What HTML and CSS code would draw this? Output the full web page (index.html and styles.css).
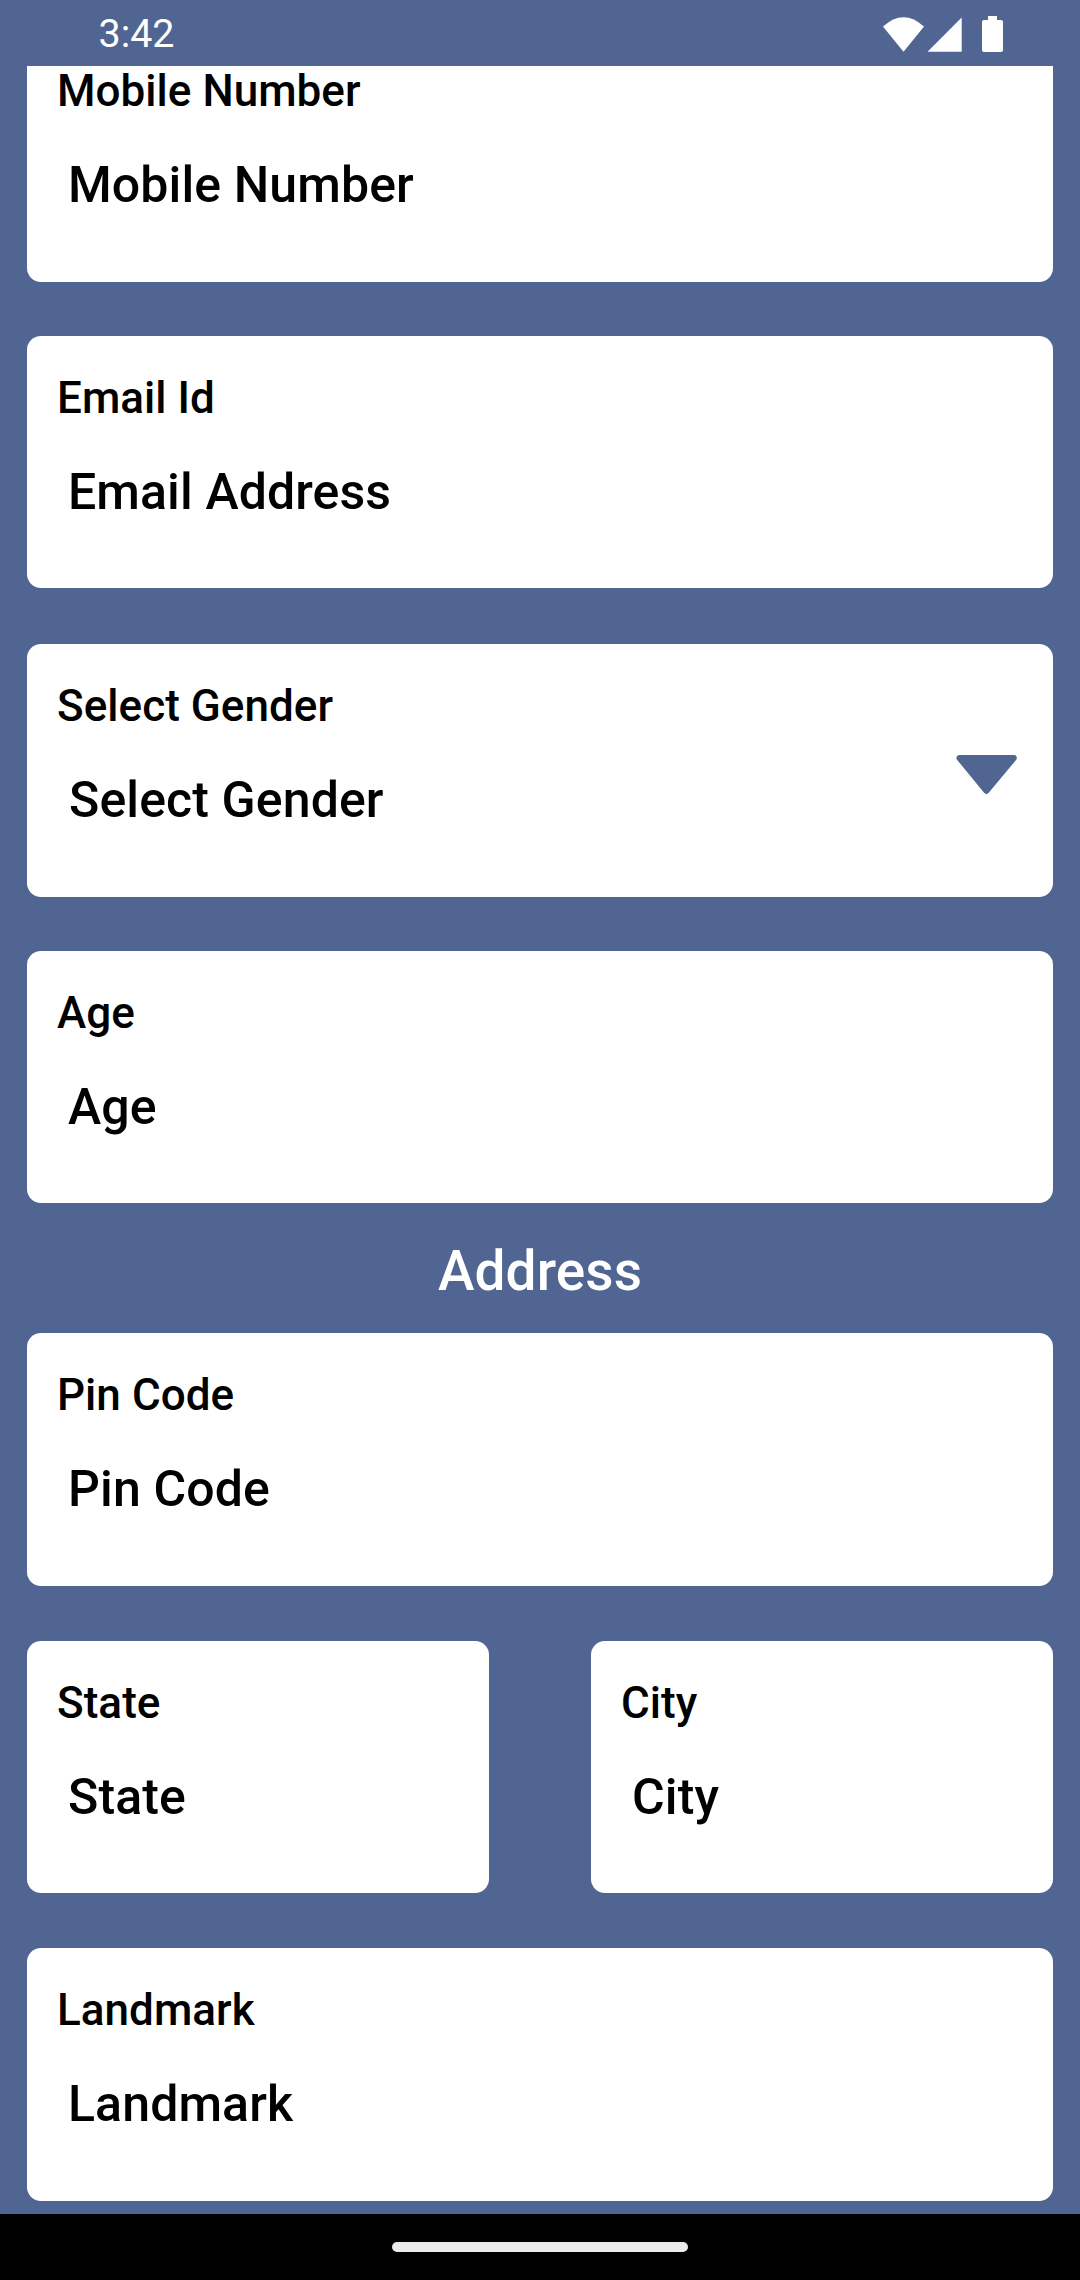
FILE: index.html
```html
<!DOCTYPE html>
<html lang="en">
<head>
<meta charset="utf-8">
<title>Registration</title>
<link rel="stylesheet" href="styles.css">
</head>
<body>
<div class="screen">
  <header class="status">
    <span class="time">3:42</span>
    <svg class="status-icons" width="130" height="66" viewBox="0 0 130 66" fill="#fff">
      <path d="M6 26.5Q26.5 8 47 26.5L26.5 51.7Z"/>
      <path d="M84.7 17.5V51.8H50.5Z"/>
      <path d="M111 16h9v4h4q2 0 2 2v28q0 2-2 2h-17q-2 0-2-2V22q0-2 2-2h4z"/>
    </svg>
  </header>
  <main class="form">
    <section class="card first"><label class="label">Mobile Number</label><div class="value">Mobile Number</div></section>
    <section class="card"><label class="label">Email Id</label><div class="value">Email Address</div></section>
    <section class="card tall select"><div><label class="label">Select Gender</label><div class="value">Select Gender</div></div>
      <svg class="arrow" width="62" height="42" viewBox="0 0 62 42"><path d="M4.5 5H58.8L31.4 37.8Z" stroke-width="6" stroke-linejoin="round"/></svg>
    </section>
    <section class="card"><label class="label">Age</label><div class="value">Age</div></section>
    <h2 class="heading">Address</h2>
    <section class="card tall"><label class="label">Pin Code</label><div class="value">Pin Code</div></section>
    <div class="row">
      <section class="card"><label class="label">State</label><div class="value">State</div></section>
      <section class="card"><label class="label">City</label><div class="value">City</div></section>
    </div>
    <section class="card tall"><label class="label">Landmark</label><div class="value">Landmark</div></section>
  </main>
  <footer class="nav"><div class="handle"></div></footer>
</div>
</body>
</html>
```
FILE: styles.css
```css
* { box-sizing: border-box; }
body { margin: 0; font-family: Roboto, sans-serif; }
.screen { width: 1080px; height: 2280px; background: #516592; display: flex; flex-direction: column; overflow: hidden; }
.status { height: 66px; flex: none; display: flex; justify-content: space-between; padding: 0 73px 0 98.5px; color: #fff; }
.time { font-size: 39.4px; line-height: 67px; }
.form { flex: 1; min-height: 0; overflow: hidden; display: flex; flex-direction: column; padding: 0 27px; gap: 55px; }
.card { flex: none; height: 252px; background: #fff; border-radius: 14px; padding: 36px 30px 0; color: #000; font-weight: 500; }
.tall { height: 253px; }
.first { margin-top: -37px; height: 253px; margin-bottom: -1px; }
.label { display: block; font-size: 44px; line-height: 52px; letter-spacing: .04px; }
.value { font-size: 50px; line-height: 60px; margin-top: 38px; padding-left: 11px; letter-spacing: .12px; }
.select { display: flex; justify-content: space-between; margin: 1px 0 -1px; }
.select .value { padding-left: 12px; }
.arrow { margin: 73px 6px 0 0; fill: #516592; stroke: #516592; }
.heading { margin: -55px 0; height: 130px; line-height: 136px; font-size: 55px; font-weight: 500; letter-spacing: .1px; color: #fff; text-align: center; flex: none; }
.row { display: grid; grid-template-columns: 1fr 1fr; gap: 102px; flex: none; }
.nav { height: 66px; flex: none; background: #000; display: flex; justify-content: center; align-items: center; }
.handle { width: 296px; height: 10px; border-radius: 5px; background: #ebebeb; }
```
